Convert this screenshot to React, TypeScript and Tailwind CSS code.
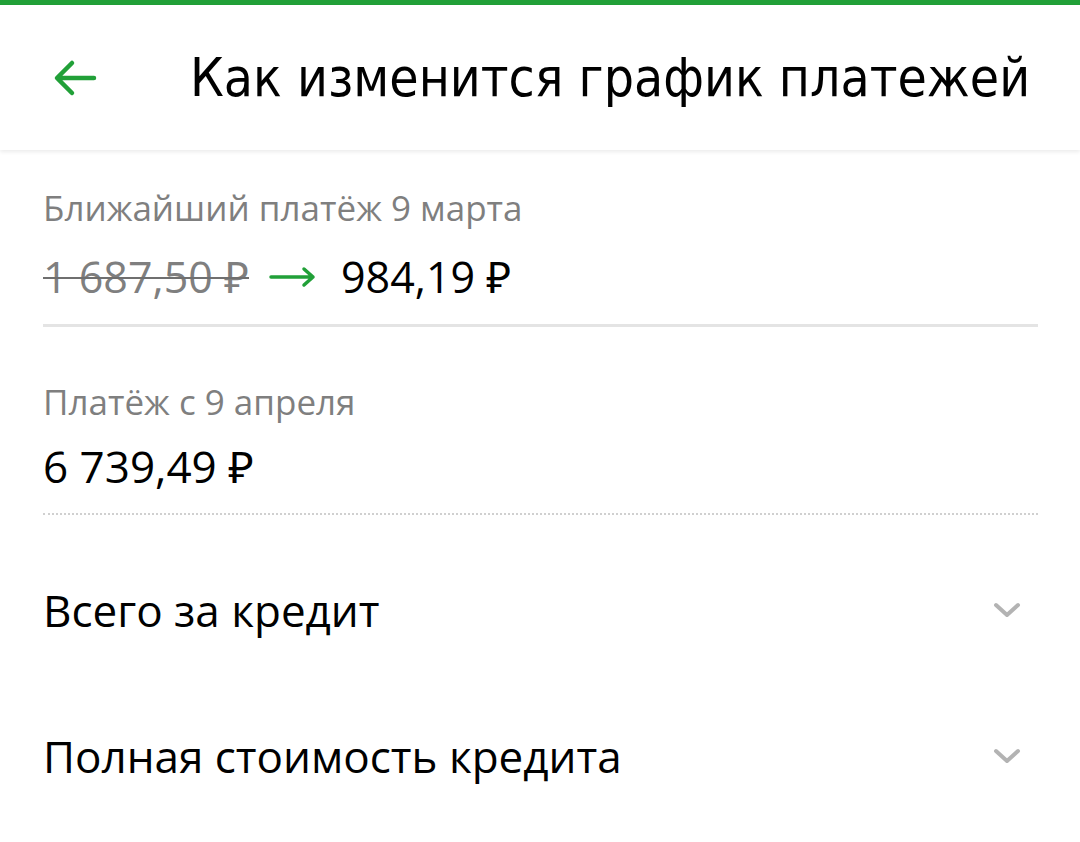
import React from "react";

function Chevron() {
  return (
    <svg width="30" height="20" viewBox="0 0 30 20" fill="none">
      <path d="M4 5l11 10 11-10" stroke="#b3b3b3" strokeWidth="4" strokeLinecap="round" strokeLinejoin="round" />
    </svg>
  );
}

export default function App() {
  return (
    <div className="w-[1080px] h-[842px] bg-white overflow-hidden" style={{ fontFamily: "'Open Sans', 'Noto Sans', sans-serif" }}>
      {/* верхняя полоса */}
      <div className="h-[5px] bg-[#21a038]" />

      {/* шапка */}
      <div className="h-[145px] flex items-center bg-white shadow-[0_2px_4px_rgba(0,0,0,0.08)] relative">
        <div className="w-[190px] pl-[52px] flex items-center">
          <svg width="46" height="40" viewBox="0 0 46 40" fill="none">
            <path d="M42 20H6M20 5L5 20l15 15" stroke="#21a038" strokeWidth="4.5" strokeLinecap="round" strokeLinejoin="round" />
          </svg>
        </div>
        <h1 className="text-[53px] text-black leading-none" style={{ fontFamily: "'DejaVu Sans Condensed', Roboto, sans-serif" }}>
          Как изменится график платежей
        </h1>
      </div>

      <div className="px-[43px] pr-[42px]">
        {/* ближайший платёж */}
        <div className="pt-[38px]">
          <div className="text-[35px] text-[#7f7f7f] leading-[40px]">Ближайший платёж 9 марта</div>
          <div className="flex items-center mt-[27px] h-[44px]">
            <span className="text-[43px] text-[#7f7f7f] line-through decoration-[#6f6f6f] decoration-2">1 687,50 ₽</span>
            <svg className="ml-[20px] mr-[24px]" width="48" height="24" viewBox="0 0 48 24" fill="none">
              <path d="M2 12h42M35 4l9 8-9 8" stroke="#21a038" strokeWidth="3.5" strokeLinecap="round" strokeLinejoin="round" />
            </svg>
            <span className="text-[43px] text-black">984,19 ₽</span>
          </div>
          <div className="mt-[25px] h-[3px] bg-[#e4e4e4]" />
        </div>

        {/* платёж с 9 апреля */}
        <div className="pt-[55px]">
          <div className="text-[35px] text-[#7f7f7f] leading-[40px]">Платёж с 9 апреля</div>
          <div className="text-[44px] text-black mt-[22px] leading-[44px]">6 739,49 ₽</div>
          <div className="mt-[25px] border-b-2 border-dotted border-[#d0d0d0]" />
        </div>

        {/* раскрывающиеся секции */}
        <div className="flex items-center justify-between h-[146px] mt-[22px]">
          <span className="text-[44px] text-black">Всего за кредит</span>
          <span className="mr-[16px]"><Chevron /></span>
        </div>
        <div className="flex items-center justify-between h-[146px]">
          <span className="text-[44px] text-black">Полная стоимость кредита</span>
          <span className="mr-[16px]"><Chevron /></span>
        </div>
      </div>
    </div>
  );
}
